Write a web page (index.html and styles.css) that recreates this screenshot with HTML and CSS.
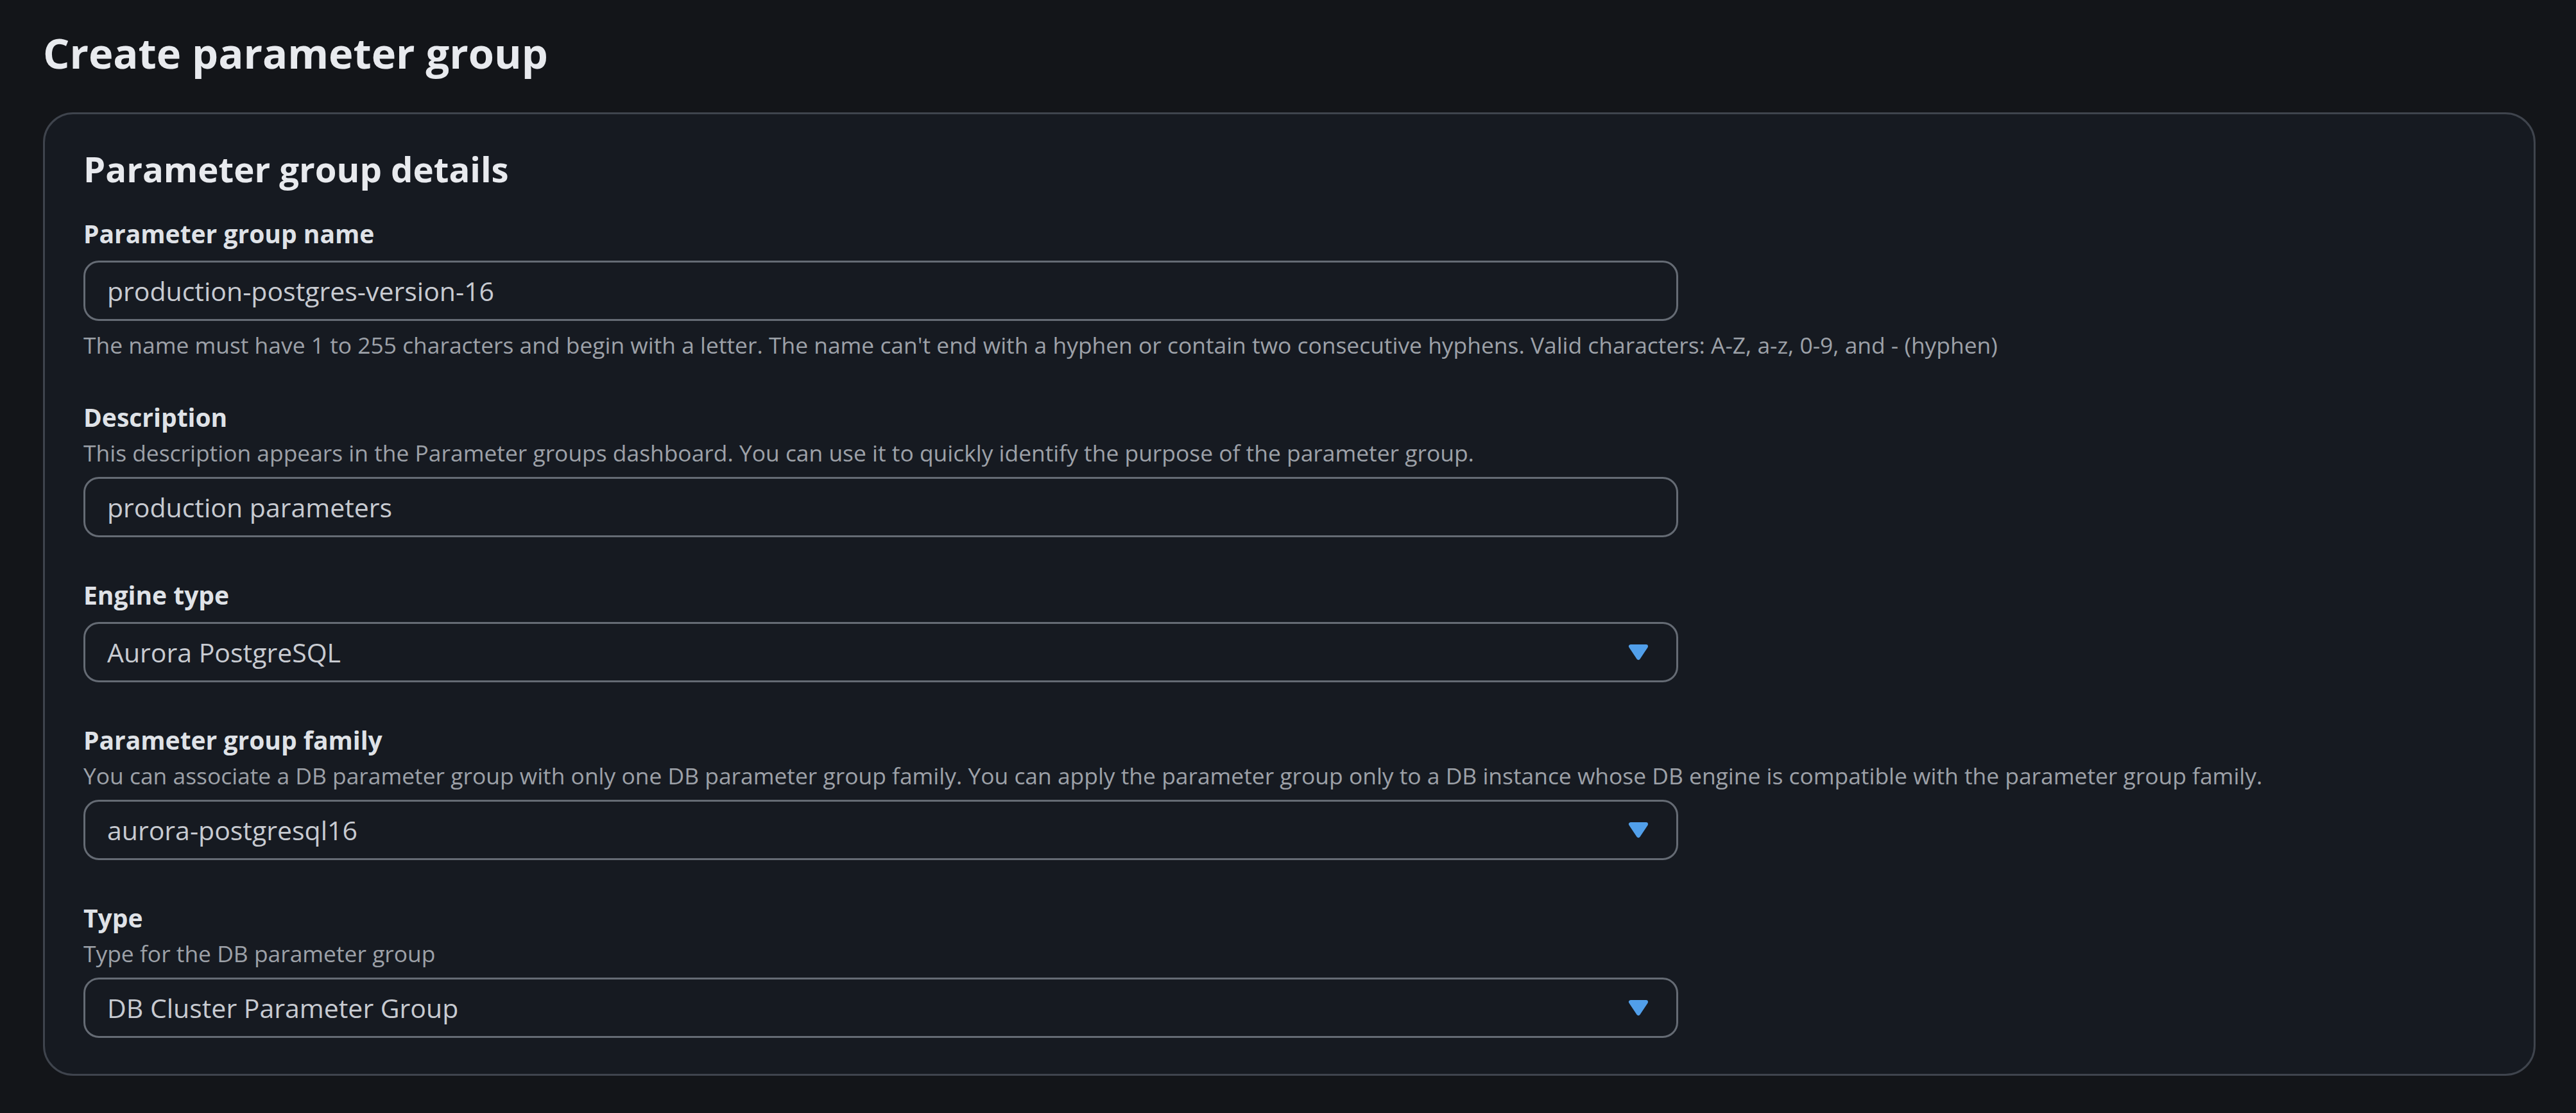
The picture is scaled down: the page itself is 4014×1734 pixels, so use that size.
FILE: index.html
```html
<!DOCTYPE html>
<html lang="en">
<head>
    <meta charset="UTF-8">
    <meta name="viewport" content="width=device-width, initial-scale=1.0">
    <title>Create parameter group</title>
    <link rel="stylesheet" href="styles.css">
</head>
<body>
    <div class="page">
        <h1 class="page-title">Create parameter group</h1>

        <div class="panel">
            <h2 class="panel-title">Parameter group details</h2>

            <div class="field">
                <label class="field-label" for="groupName">Parameter group name</label>
                <input class="field-input" type="text" id="groupName" value="production-postgres-version-16">
                <div class="field-hint">The name must have 1 to 255 characters and begin with a letter. The name can't end with a hyphen or contain two consecutive hyphens. Valid characters: A-Z, a-z, 0-9, and - (hyphen)</div>
            </div>

            <div class="field">
                <label class="field-label" for="groupDesc">Description</label>
                <div class="field-desc">This description appears in the Parameter groups dashboard. You can use it to quickly identify the purpose of the parameter group.</div>
                <input class="field-input" type="text" id="groupDesc" value="production parameters">
            </div>

            <div class="field">
                <div class="field-label">Engine type</div>
                <div class="field-select">
                    <span>Aurora PostgreSQL</span>
                    <svg class="caret" viewBox="0 0 16 16"><path d="M4 5h8l-4 6-4-6z"/></svg>
                </div>
            </div>

            <div class="field">
                <div class="field-label">Parameter group family</div>
                <div class="field-desc">You can associate a DB parameter group with only one DB parameter group family. You can apply the parameter group only to a DB instance whose DB engine is compatible with the parameter group family.</div>
                <div class="field-select">
                    <span>aurora-postgresql16</span>
                    <svg class="caret" viewBox="0 0 16 16"><path d="M4 5h8l-4 6-4-6z"/></svg>
                </div>
            </div>

            <div class="field">
                <div class="field-label">Type</div>
                <div class="field-desc">Type for the DB parameter group</div>
                <div class="field-select">
                    <span>DB Cluster Parameter Group</span>
                    <svg class="caret" viewBox="0 0 16 16"><path d="M4 5h8l-4 6-4-6z"/></svg>
                </div>
            </div>
        </div>
    </div>
</body>
</html>
```

FILE: styles.css
```css
body {
    margin: 0;
    background-color: #131519;
    font-family: "Open Sans", "Noto Sans", sans-serif;
    color: #dfe2e7;
}

.page {
    padding: 38px 63px 0 67px;
}

.page-title {
    margin: 0 0 49px 0;
    font-size: 65px;
    line-height: 88px;
    font-weight: 700;
    color: #e8eaee;
}

.panel {
    background-color: #161a21;
    border: 3px solid #3f444d;
    border-radius: 47px;
    padding: 53px 60px 56px 60px;
}

.panel-title {
    margin: 0;
    font-size: 54.5px;
    line-height: 64px;
    font-weight: 700;
    color: #e8eaee;
}

.field {
    display: flex;
    flex-direction: column;
    align-items: flex-start;
    margin-top: 61px;
}

.panel-title + .field {
    margin-top: 40px;
}

.field-label {
    font-size: 39px;
    line-height: 58px;
    font-weight: 700;
    color: #dfe2e7;
}

.field-desc {
    margin-top: 3px;
    margin-bottom: 2px;
    font-size: 35.4px;
    line-height: 46px;
    color: #9da1a8;
}

.field-hint {
    margin-top: 14px;
    font-size: 35.4px;
    line-height: 46px;
    color: #9da1a8;
}

.field-input,
.field-select {
    box-sizing: border-box;
    width: 2485px;
    height: 94px;
    margin-top: 13px;
    padding: 0 35px 0 34px;
    background-color: #161a21;
    border: 3px solid #656b74;
    border-radius: 24px;
    font-family: inherit;
    font-size: 41px;
    color: #c8cbd1;
}

.field-input {
    outline: none;
}

.field-select {
    display: flex;
    align-items: center;
    justify-content: space-between;
}

.caret {
    width: 48px;
    height: 48px;
}

.caret path {
    fill: #519fea;
    stroke: #519fea;
    stroke-width: 2;
    stroke-linejoin: round;
}
```
